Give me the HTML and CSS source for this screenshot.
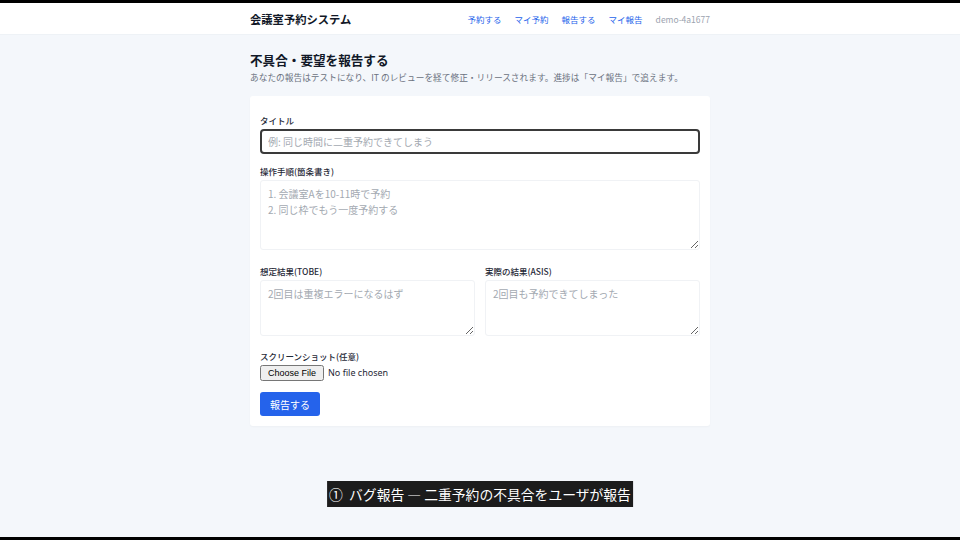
FILE: index.html
```html
<!DOCTYPE html>
<html lang="ja">
<head>
    <meta charset="UTF-8">
    <title>会議室予約システム - 不具合・要望を報告する</title>
    <link rel="stylesheet" href="styles.css">
</head>
<body>
    <div class="screen">
        <header class="topbar">
            <div class="topbar-inner">
                <div class="brand">会議室予約システム</div>
                <nav class="nav">
                    <a href="#">予約する</a>
                    <a href="#">マイ予約</a>
                    <a href="#">報告する</a>
                    <a href="#">マイ報告</a>
                    <span class="user">demo-4a1677</span>
                </nav>
            </div>
        </header>

        <main class="container">
            <h2>不具合・要望を報告する</h2>
            <p class="lead">あなたの報告はテストになり、IT のレビューを経て修正・リリースされます。進捗は「マイ報告」で追えます。</p>

            <form class="card">
                <div class="field">
                    <label>タイトル</label>
                    <input type="text" class="input focused" placeholder="例: 同じ時間に二重予約できてしまう">
                </div>
                <div class="field steps">
                    <label>操作手順(箇条書き)</label>
                    <textarea class="input tall" placeholder="1. 会議室Aを10-11時で予約&#10;2. 同じ枠でもう一度予約する"></textarea>
                </div>
                <div class="row">
                    <div class="field">
                        <label>想定結果(TOBE)</label>
                        <textarea class="input short" placeholder="2回目は重複エラーになるはず"></textarea>
                    </div>
                    <div class="field">
                        <label>実際の結果(ASIS)</label>
                        <textarea class="input short" placeholder="2回目も予約できてしまった"></textarea>
                    </div>
                </div>
                <div class="field shot">
                    <label>スクリーンショット(任意)</label>
                    <input type="file" class="file">
                </div>
                <button type="button" class="submit">報告する</button>
            </form>
        </main>

        <div class="caption">①&nbsp; バグ報告 — 二重予約の不具合をユーザが報告</div>
    </div>
</body>
</html>
```

FILE: styles.css
```css
* {
    box-sizing: border-box;
}
body {
    margin: 0;
    background: #000;
    font-family: "Noto Sans CJK JP", "Noto Sans", sans-serif;
    color: #1f2937;
}
.screen {
    position: relative;
    height: 534px;
    margin-top: 3px;
    background: #f4f7fb;
}
.topbar {
    background: #fff;
    height: 32px;
    border-bottom: 1px solid #eef2f6;
}
.topbar-inner {
    width: 460px;
    height: 100%;
    margin: 0 auto;
    display: flex;
    justify-content: space-between;
    align-items: center;
}
.brand {
    font-size: 11.3px;
    font-weight: bold;
    color: #111827;
}
.nav {
    display: flex;
    gap: 13px;
    font-size: 8.5px;
}
.nav a {
    color: #2563eb;
    text-decoration: none;
}
.nav .user {
    color: #9ca3af;
}
.container {
    width: 460px;
    margin: 0 auto;
    padding-top: 15px;
}
h2 {
    margin: 0;
    font-size: 12.6px;
    line-height: 20px;
    color: #111827;
}
.lead {
    margin: 1px 0 12px;
    font-size: 8.7px;
    line-height: 13px;
    color: #6b7280;
}
.card {
    background: #fff;
    border-radius: 3px;
    box-shadow: 0 1px 2px rgba(0, 0, 0, 0.03);
    padding: 18px 10px 10px;
}
.field label {
    display: block;
    font-size: 8.5px;
    line-height: 12px;
    font-weight: 500;
    color: #1f2937;
    margin-bottom: 3px;
}
.input {
    display: block;
    width: 100%;
    border: 1px solid #f0f2f5;
    border-radius: 3px;
    font-family: inherit;
    font-size: 10px;
    padding: 5px 7px;
    color: #1f2937;
    background: #fff;
}
.input::placeholder {
    color: #a3a9b1;
}
.input.focused {
    height: 25px;
    border: 2px solid #3a3a3a;
    border-radius: 4px;
    outline: none;
    padding: 3px 6px;
}
textarea.input {
    resize: vertical;
    line-height: 16px;
}
.tall {
    height: 70px;
}
.short {
    height: 56px;
}
.steps {
    margin-top: 11px;
}
.row {
    display: grid;
    grid-template-columns: 1fr 1fr;
    gap: 10px;
    margin-top: 15px;
}
.shot {
    margin-top: 14px;
}
.file {
    display: block;
    height: 18px;
    font-family: "Noto Sans", sans-serif;
    font-size: 9px;
    line-height: 12px;
    color: #1f2937;
}
.submit {
    display: block;
    margin-top: 9px;
    background: #2563eb;
    color: #fff;
    border: none;
    border-radius: 3px;
    height: 24px;
    padding: 0 10px;
    font-family: inherit;
    font-size: 10px;
}
.caption {
    position: absolute;
    top: 478px;
    left: 50%;
    transform: translateX(-50%);
    background: #1c1c1c;
    color: #fff;
    font-size: 13.8px;
    line-height: 26px;
    padding: 0 2px;
    white-space: nowrap;
}
```
